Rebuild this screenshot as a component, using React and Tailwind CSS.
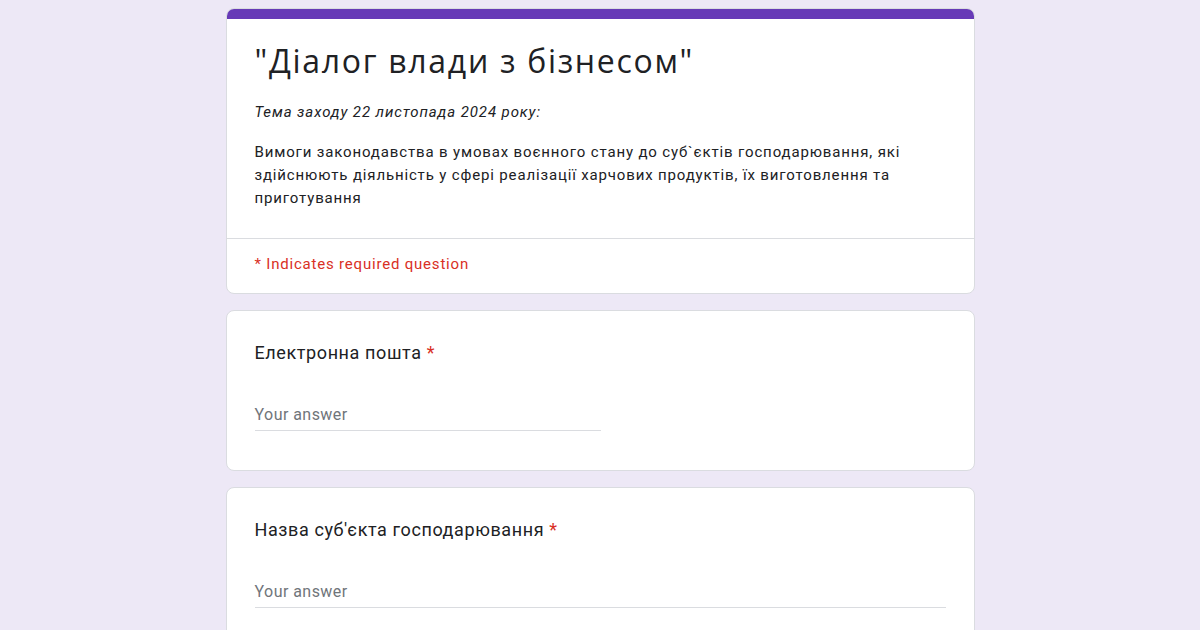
export default function App() {
  return (
    <div className="h-[630px] overflow-hidden bg-[#ede8f6] flex justify-center pt-2 font-['Roboto',_sans-serif]">
      <div className="w-[749px] flex flex-col gap-4">
        {/* header card */}
        <div className="shrink-0 bg-white rounded-lg border border-[#dadce0] overflow-hidden">
          <div className="h-[10px] bg-[#673ab7]"></div>
          <div className="px-[28px] pt-[22px] pb-[28px]">
            <h1 className="text-[32px] leading-10 text-[#202124] tracking-[1.7px] font-['Open_Sans',_sans-serif]">"Діалог влади з бізнесом"</h1>
            <p className="mt-[21px] text-[15px] leading-5 italic text-[#202124] tracking-[0.9px]">Тема заходу 22 листопада 2024 року:</p>
            <p className="mt-[19px] text-[15px] leading-[23px] text-[#202124] tracking-[0.85px]">
              Вимоги законодавства в умовах воєнного стану до суб`єктів господарювання, які здійснюють діяльність у сфері реалізації харчових продуктів, їх виготовлення та приготування
            </p>
          </div>
          <div className="border-t border-[#dadce0] px-[28px] pt-[15px] pb-[19px]">
            <p className="text-[15px] leading-5 text-[#d93025] tracking-[0.8px]">* Indicates required question</p>
          </div>
        </div>

        {/* question: email */}
        <div className="shrink-0 bg-white rounded-lg border border-[#dadce0] px-[28px] pt-[30px] pb-[39px]">
          <div className="text-[18px] leading-6 text-[#202124] tracking-[0.6px]">
            Електронна пошта <span className="text-[#d93025]">*</span>
          </div>
          <div className="mt-[38px] w-[346px] border-b border-[#dadce0] pb-[3px]">
            <span className="text-[16px] leading-5 text-[#70757a] tracking-[0.45px]">Your answer</span>
          </div>
        </div>

        {/* question: business name */}
        <div className="shrink-0 bg-white rounded-lg border border-[#dadce0] px-[28px] pt-[30px] pb-[39px]">
          <div className="text-[18px] leading-6 text-[#202124] tracking-[0.6px]">
            Назва суб'єкта господарювання <span className="text-[#d93025]">*</span>
          </div>
          <div className="mt-[38px] w-full border-b border-[#dadce0] pb-[3px]">
            <span className="text-[16px] leading-5 text-[#70757a] tracking-[0.45px]">Your answer</span>
          </div>
        </div>
      </div>
    </div>
  )
}
